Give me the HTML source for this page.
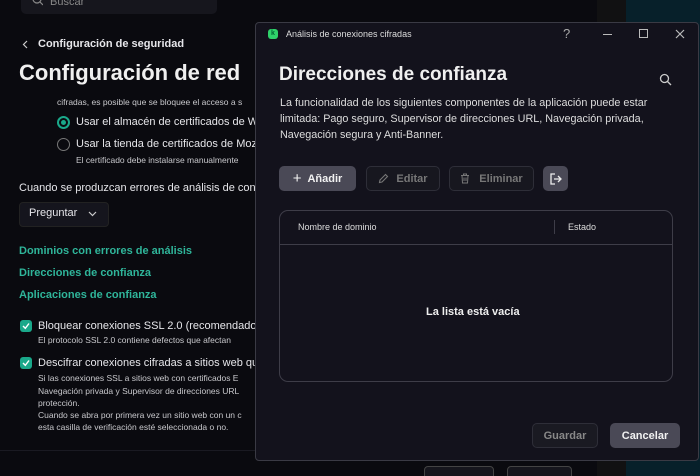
<!DOCTYPE html>
<html><head><meta charset="utf-8"><style>
*{box-sizing:border-box;margin:0;padding:0}
html,body{width:700px;height:476px;overflow:hidden}
body{background:#0a0a0f;font-family:"Liberation Sans",sans-serif;color:#e6e6ea;position:relative}
.a{position:absolute;white-space:nowrap}
.g{color:#2fb59a;font-weight:bold;font-size:11px}
.s{font-size:8.5px;color:#c8c8cc}
.t{font-size:11px;color:#e6e6ea}
.cb{position:absolute;width:12px;height:12px;border-radius:3px;background:#1aa88a}
.btn{position:absolute;height:25px;border-radius:5px;font-size:11px;font-weight:bold;display:flex;align-items:center;justify-content:center}
</style></head><body>
<div class="a" style="left:597px;top:0;width:29px;height:476px;background:#111112"></div>
<div class="a" style="left:626px;top:0;width:74px;height:476px;background:#07202a"></div>
<div class="a" style="left:21px;top:-8px;width:196px;height:22px;background:#16161d;border-radius:5px"></div>
<div class="a" style="left:50px;top:-4px;font-size:11px;color:#888">Buscar</div>
<svg class="a" style="left:31px;top:-5px" width="12" height="12"><circle cx="6" cy="4" r="4" fill="none" stroke="#888" stroke-width="1.2"/><line x1="9" y1="7" x2="12" y2="10" stroke="#888" stroke-width="1.2"/></svg>
<svg class="a" style="left:22px;top:40px" width="6" height="9"><path d="M5 1L1.5 4.5L5 8" fill="none" stroke="#ccc" stroke-width="1.2"/></svg>
<div class="a" style="left:38px;top:38px;font-size:11px;font-weight:bold">Configuración de seguridad</div>
<div class="a" style="left:19px;top:60px;font-size:22px;font-weight:bold;color:#f0f0f0">Configuración de red</div>
<div class="a s" style="left:57px;top:97px">cifradas, es posible que se bloquee el acceso a s</div>
<div class="a" style="left:57px;top:116px;width:13px;height:13px;border-radius:50%;border:2px solid #1aa88a"><div style="margin:2px;width:5px;height:5px;border-radius:50%;background:#1aa88a"></div></div>
<div class="a t" style="left:76px;top:116px">Usar el almacén de certificados de W</div>
<div class="a" style="left:57px;top:138px;width:13px;height:13px;border-radius:50%;border:1.5px solid #777"></div>
<div class="a t" style="left:76px;top:138px">Usar la tienda de certificados de Moz</div>
<div class="a s" style="left:76px;top:155px">El certificado debe instalarse manualmente</div>
<div class="a t" style="left:19px;top:182px">Cuando se produzcan errores de análisis de cone</div>
<div class="a" style="left:19px;top:202px;width:90px;height:25px;background:#15151d;border-radius:4px;border:1px solid #222"></div>
<div class="a t" style="left:29px;top:207px">Preguntar</div>
<svg class="a" style="left:88px;top:211px" width="9" height="6"><path d="M1 1L4.5 4.5L8 1" fill="none" stroke="#ccc" stroke-width="1.2"/></svg>
<div class="a g" style="left:19px;top:245px">Dominios con errores de análisis</div>
<div class="a g" style="left:19px;top:267px">Direcciones de confianza</div>
<div class="a g" style="left:19px;top:289px">Aplicaciones de confianza</div>
<div class="cb" style="left:20px;top:320px"></div>
<svg class="a" style="left:22px;top:322px" width="8" height="8"><path d="M1 4L3.3 6.3L7 1.5" fill="none" stroke="#fff" stroke-width="1.4"/></svg>
<div class="a t" style="left:38px;top:320px">Bloquear conexiones SSL 2.0 (recomendado)</div>
<div class="a s" style="left:38px;top:335px">El protocolo SSL 2.0 contiene defectos que afectan</div>
<div class="cb" style="left:20px;top:357px"></div>
<svg class="a" style="left:22px;top:359px" width="8" height="8"><path d="M1 4L3.3 6.3L7 1.5" fill="none" stroke="#fff" stroke-width="1.4"/></svg>
<div class="a t" style="left:38px;top:357px">Descifrar conexiones cifradas a sitios web qu</div>
<div class="a s" style="left:38px;top:373px">Si las conexiones SSL a sitios web con certificados E</div>
<div class="a s" style="left:38px;top:386px">Navegación privada y Supervisor de direcciones URL</div>
<div class="a s" style="left:38px;top:398px">protección.</div>
<div class="a s" style="left:38px;top:410px">Cuando se abra por primera vez un sitio web con un c</div>
<div class="a s" style="left:38px;top:422px">esta casilla de verificación esté seleccionada o no.</div>
<div class="a" style="left:0;top:450px;width:597px;height:1px;background:#1a1a22"></div>
<div class="a" style="left:424px;top:466px;width:70px;height:20px;border:1px solid #444;border-radius:4px;background:#16161d"></div>
<div class="a" style="left:507px;top:466px;width:65px;height:20px;border:1px solid #444;border-radius:4px;background:#16161d"></div>
<!-- dialog -->
<div class="a" style="left:255px;top:22px;width:444px;height:439px;background:#13121c;border:1px solid #3a3a44;border-radius:4px"></div>
<div class="a" style="left:268px;top:29px;width:10px;height:10px;border-radius:3px;background:#2fd16a;font-size:7px;text-align:center;line-height:10px;font-weight:bold;color:#063">k</div>
<div class="a" style="left:286px;top:29px;font-size:9px;color:#ddd">Análisis de conexiones cifradas</div>
<div class="a" style="left:563px;top:26px;font-size:13px;color:#aaa">?</div>
<div class="a" style="left:603px;top:34px;width:9px;height:1px;background:#bbb"></div>
<div class="a" style="left:639px;top:29px;width:9px;height:9px;border:1.2px solid #bbb"></div>
<svg class="a" style="left:675px;top:29px" width="10" height="10"><path d="M1 1L9 9M9 1L1 9" stroke="#bbb" stroke-width="1.2"/></svg>
<div class="a" style="left:279px;top:64px;font-size:19px;font-weight:bold;color:#f0f0f0">Direcciones de confianza</div>
<svg class="a" style="left:659px;top:73px" width="13" height="13"><circle cx="5.5" cy="5.5" r="4" fill="none" stroke="#ccc" stroke-width="1.3"/><line x1="8.5" y1="8.5" x2="12" y2="12" stroke="#ccc" stroke-width="1.3"/></svg>
<div class="a" style="left:280px;top:95px;font-size:10.8px;line-height:16px;color:#ddd;white-space:normal;width:380px">La funcionalidad de los siguientes componentes de la aplicación puede estar limitada: Pago seguro, Supervisor de direcciones URL, Navegación privada, Navegación segura y Anti-Banner.</div>
<div class="btn" style="left:279px;top:166px;width:77px;background:#4a4956;color:#f2f2f2"><span style="font-size:15px;font-weight:normal;margin-right:6px">+</span>Añadir</div>
<div class="btn" style="left:366px;top:166px;width:74px;border:1px solid #2e2e38;background:#17171f;color:#777"><svg width="11" height="11" style="margin-right:7px"><path d="M1.5 9.5L2 7L7.5 1.5L9.5 3.5L4 9Z" fill="none" stroke="#777" stroke-width="1.1"/></svg>Editar</div>
<div class="btn" style="left:449px;top:166px;width:85px;border:1px solid #2e2e38;background:#17171f;color:#777"><svg width="10" height="11" style="margin-right:9px"><path d="M1 2.5H9M3.5 2.5V1H6.5V2.5M2 2.5L2.5 10H7.5L8 2.5M4 4.5V8M6 4.5V8" fill="none" stroke="#777" stroke-width="1"/></svg>Eliminar</div>
<div class="btn" style="left:543px;top:166px;width:25px;background:#4a4956"><svg width="12" height="12"><path d="M5 1H1V11H5M4 6H11M8 3L11 6L8 9" fill="none" stroke="#eee" stroke-width="1.3"/></svg></div>
<div class="a" style="left:279px;top:210px;width:394px;height:172px;border:1px solid #3e3d48;border-radius:9px"></div>
<div class="a" style="left:280px;top:244px;width:392px;height:1px;background:#3e3d48"></div>
<div class="a" style="left:554px;top:220px;width:1px;height:14px;background:#3e3d48"></div>
<div class="a" style="left:298px;top:222px;font-size:9px;color:#ddd">Nombre de dominio</div>
<div class="a" style="left:568px;top:222px;font-size:9px;color:#ddd">Estado</div>
<div class="a" style="left:426px;top:306px;font-size:11px;font-weight:bold;color:#eee">La lista está vacía</div>
<div class="btn" style="left:532px;top:423px;width:66px;border:1px solid #2e2e38;background:#1a1a22;color:#888">Guardar</div>
<div class="btn" style="left:610px;top:423px;width:70px;background:#4a4956;color:#f2f2f2">Cancelar</div>
</body></html>
